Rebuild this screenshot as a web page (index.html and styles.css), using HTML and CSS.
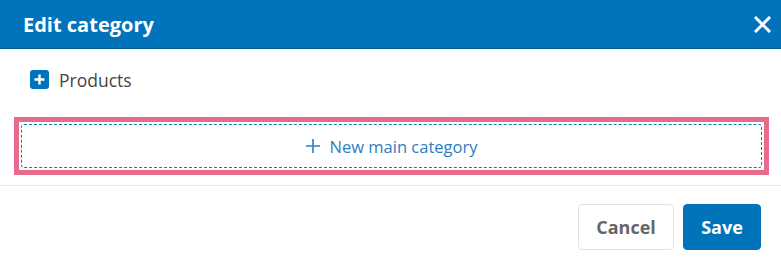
FILE: index.html
```html
<!DOCTYPE html>
<html lang="en">
<head>
    <meta charset="UTF-8">
    <meta name="viewport" content="width=device-width, initial-scale=1.0">
    <title>Edit category</title>
    <link rel="stylesheet" href="styles.css">
</head>
<body>
    <div class="dialog">
        <div class="dialog-header">
            <div class="dialog-title">Edit category</div>
            <button class="close-btn" aria-label="Close">
                <svg width="17" height="17" viewBox="0 0 17 17">
                    <path d="M2 2 L15 15 M15 2 L2 15" stroke="#fff" stroke-width="3" stroke-linecap="square" fill="none"/>
                </svg>
            </button>
        </div>

        <div class="dialog-body">
            <div class="tree-item">
                <span class="expand-icon">
                    <svg width="11" height="11" viewBox="0 0 11 11">
                        <path d="M5.5 0.5 V10.5 M0.5 5.5 H10.5" stroke="#fff" stroke-width="2.4" fill="none"/>
                    </svg>
                </span>
                <span class="tree-label">Products</span>
            </div>

            <div class="highlight-box">
                <button class="new-category">
                    <svg width="14" height="14" viewBox="0 0 14 14">
                        <path d="M7 0 V14 M0 7 H14" stroke="#2f7dc1" stroke-width="1.6" fill="none"/>
                    </svg>
                    <span>New main category</span>
                </button>
            </div>
        </div>

        <div class="dialog-footer">
            <button class="btn btn-cancel">Cancel</button>
            <button class="btn btn-save">Save</button>
        </div>
    </div>
</body>
</html>
```

FILE: styles.css
```css
body {
    margin: 0;
    font-family: "Open Sans", Arial, sans-serif;
    background-color: #fff;
}
.dialog {
    width: 781px;
}
.dialog-header {
    display: flex;
    align-items: center;
    justify-content: space-between;
    height: 48px;
    padding: 0 10px 0 23px;
    background-color: #0073bb;
    border-bottom: 1px solid #005a96;
}
.dialog-title {
    color: #fff;
    font-size: 20px;
    font-weight: 700;
}
.close-btn {
    display: flex;
    padding: 0;
    border: none;
    background: none;
    cursor: pointer;
}
.dialog-body {
    padding: 20px 12px 10px 14px;
    border-bottom: 1px solid #e6e6e6;
}
.tree-item {
    display: flex;
    align-items: center;
    gap: 10px;
    padding-left: 16px;
    height: 21px;
    margin-bottom: 27px;
}
.expand-icon {
    display: flex;
    align-items: center;
    justify-content: center;
    width: 19px;
    height: 19px;
    border-radius: 3px;
    background-color: #0073bb;
}
.tree-label {
    font-size: 17.5px;
    color: #444;
}
.highlight-box {
    border: 5px solid #e86b8b;
    padding: 2px;
}
.new-category {
    display: flex;
    align-items: center;
    justify-content: center;
    gap: 10px;
    width: 100%;
    height: 44px;
    border: 1px dashed #0a7cc6;
    border-radius: 3px;
    background: #fff;
    font-family: inherit;
    font-size: 16.5px;
    color: #2f7dc1;
    cursor: pointer;
}
.dialog-footer {
    display: flex;
    justify-content: flex-end;
    gap: 9px;
    padding: 18px 20px 11px 0;
}
.btn {
    height: 46px;
    border-radius: 4px;
    font-family: inherit;
    font-size: 18px;
    font-weight: 700;
    cursor: pointer;
}
.btn-cancel {
    width: 96px;
    background: #fff;
    border: 1px solid #e2e2e2;
    color: #666;
}
.btn-save {
    width: 78px;
    background: #0073bb;
    border: 1px solid #0073bb;
    color: #fff;
}
```
